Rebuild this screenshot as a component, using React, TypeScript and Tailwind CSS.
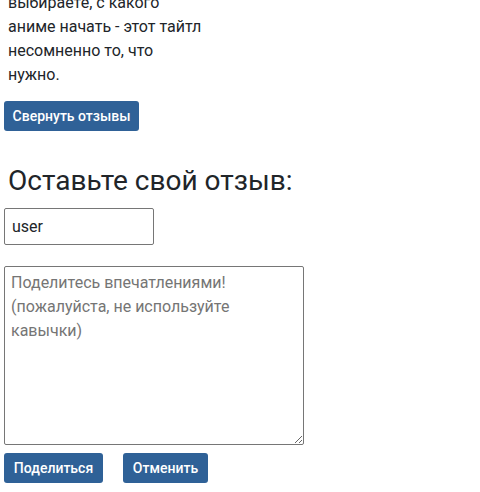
import React from 'react';

export default function App() {
  return (
    <div className="h-[492px] overflow-hidden bg-white px-[4px] font-['Roboto',sans-serif] text-[#212529]">
      {/* Review text tail */}
      <p className="-mt-[9px] ml-[4px] w-[196px] text-[16px] leading-[24px]">
        выбираете, с какого аниме начать - этот тайтл несомненно то, что нужно.
      </p>

      <button className="mt-[14px] block h-[30px] w-[135px] rounded-[3px] bg-[#2f6197] text-[14px] font-medium text-white">
        Свернуть отзывы
      </button>

      <h2 className="mt-[33px] ml-[4px] text-[28px] leading-[34px] font-normal">Оставьте свой отзыв:</h2>

      <input
        defaultValue="user"
        className="mt-[10px] block h-[37px] w-[150px] rounded-[2px] border border-[#767676] px-[7px] text-[16px] outline-none"
      />

      <textarea
        placeholder="Поделитесь впечатлениями! (пожалуйста, не используйте кавычки)"
        className="mt-[21px] block h-[179px] w-[300px] rounded-[2px] border border-[#767676] px-[6px] py-[4px] text-[16px] leading-[24px] outline-none placeholder:text-[#757575]"
      />

      <div className="mt-[8px] flex gap-[20px]">
        <button className="h-[30px] w-[99px] rounded-[3px] bg-[#2f6197] text-[14px] font-medium text-white">
          Поделиться
        </button>
        <button className="h-[30px] w-[85px] rounded-[3px] bg-[#2f6197] text-[14px] font-medium text-white">
          Отменить
        </button>
      </div>
    </div>
  );
}
